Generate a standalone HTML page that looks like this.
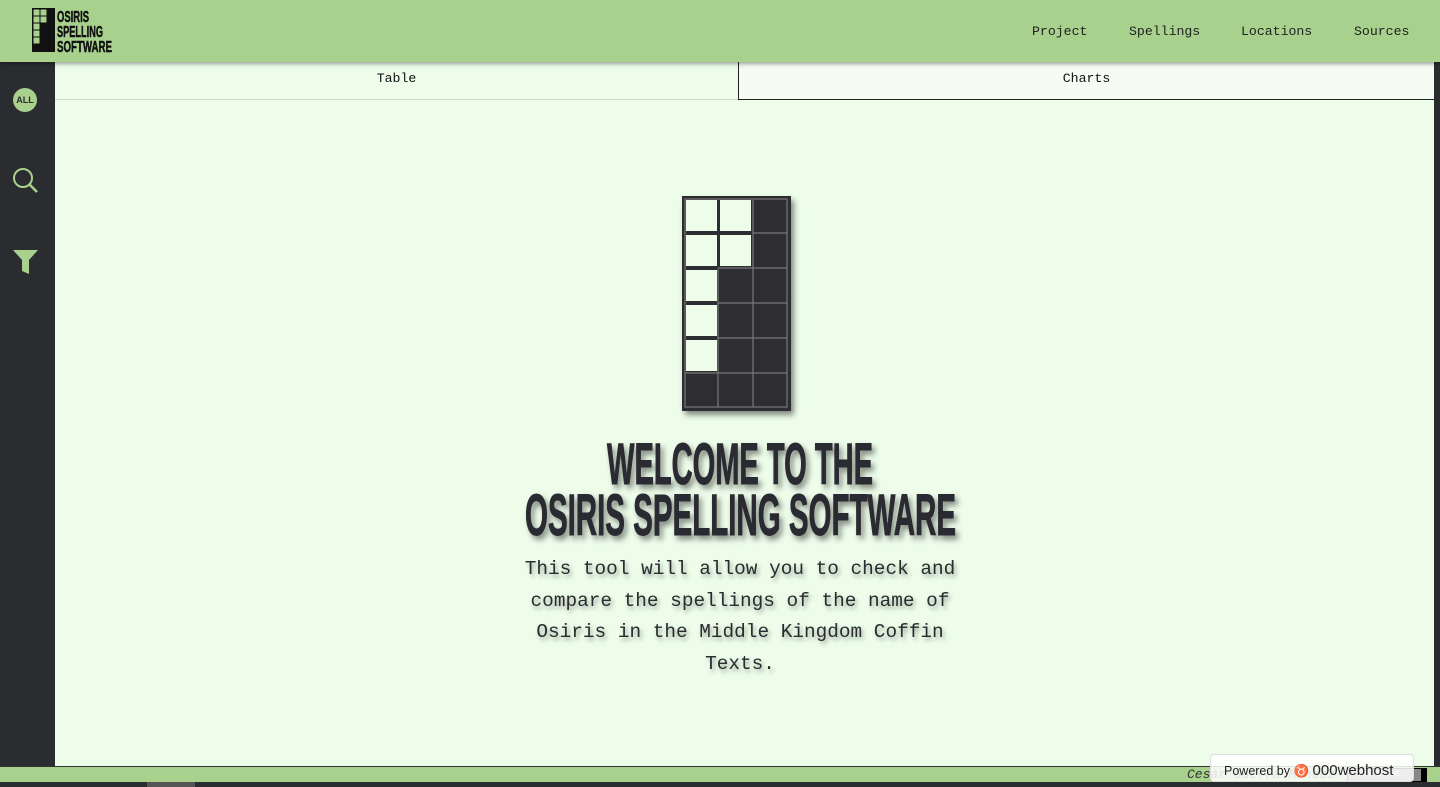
<!DOCTYPE html>
<html><head><meta charset="utf-8"><style>
*{margin:0;padding:0;box-sizing:border-box}
body{width:1440px;height:787px;overflow:hidden;background:#edfdea;font-family:"Liberation Mono",monospace;position:relative}
.hdr{position:absolute;left:0;top:0;width:1440px;height:62px;background:#a8d18d;box-shadow:0 2px 4px rgba(0,0,0,.35);z-index:3}
.nav{position:absolute;top:24px;font-size:13.2px;color:#222}
.side{position:absolute;left:0;top:62px;width:55px;height:704px;background:#2b2c30}
.tab{position:absolute;top:62px;height:38px;font-size:13.2px;color:#111;text-align:center;line-height:34px}
.foot{position:absolute;left:0;top:766px;width:1440px;height:16px;background:#a8d18d;border-top:1px solid #333}
.bot{position:absolute;left:0;top:782px;width:1440px;height:5px;background:#2b2c30}
.body{position:absolute;left:480px;width:520px;text-align:center;font-size:19.4px;line-height:31.5px;color:#2b2c30;top:554px;text-shadow:2px 3px 4px rgba(0,0,0,.35)}
</style></head><body>
<div class="hdr">
<svg style="position:absolute;left:32px;top:8px" width="23" height="44" viewBox="0 0 23 44">
<rect width="23" height="44" fill="#111"/>
<g fill="#a8d18d">
<rect x="1.5" y="1.5" width="6" height="6"/><rect x="8.5" y="1.5" width="6" height="6"/>
<rect x="1.5" y="8.5" width="6" height="6"/><rect x="8.5" y="8.5" width="6" height="6"/>
<rect x="1.5" y="15.5" width="6" height="6"/><rect x="1.5" y="22.5" width="6" height="6"/><rect x="1.5" y="29.5" width="6" height="6"/>
</g></svg>
<svg style="position:absolute;left:57px;top:7px" width="58" height="48">
<g font-family="Liberation Sans" font-weight="bold" font-size="16" fill="#111" stroke="#111" stroke-width=".5">
<text x="0" y="15" textLength="32" lengthAdjust="spacingAndGlyphs">OSIRIS</text>
<text x="0" y="30" textLength="46" lengthAdjust="spacingAndGlyphs">SPELLING</text>
<text x="0" y="45" textLength="55" lengthAdjust="spacingAndGlyphs">SOFTWARE</text></g></svg>
<div class="nav" style="left:1032px">Project</div>
<div class="nav" style="left:1129px">Spellings</div>
<div class="nav" style="left:1241px">Locations</div>
<div class="nav" style="left:1354px">Sources</div>
</div>
<div class="side">
<div style="position:absolute;left:13px;top:26px;width:24px;height:24px;border-radius:50%;background:#a8d18d;color:#2b2c30;font-family:'Liberation Sans';font-weight:bold;font-size:9px;line-height:24px;text-align:center">ALL</div>
<svg style="position:absolute;left:12px;top:105px" width="28" height="28"><circle cx="11" cy="11" r="9" fill="none" stroke="#a8d18d" stroke-width="2"/><line x1="17.5" y1="17.5" x2="25" y2="25" stroke="#a8d18d" stroke-width="2.5"/></svg>
<svg style="position:absolute;left:12px;top:187px" width="27" height="26"><path d="M1 1H26L17 11V25L10 22V11Z" fill="#a8d18d"/></svg>
</div>
<div style="position:absolute;left:1434px;top:62px;width:6px;height:704px;background:#2b2c30"></div>
<div class="tab" style="left:55px;width:683px;background:#edfdea;border-bottom:1px solid #ccd8c8">Table</div>
<div class="tab" style="left:738px;width:696px;background:#f6fbf4;border-left:1px solid #222;border-bottom:1px solid #222">Charts</div>
<svg style="position:absolute;left:676px;top:192px" width="130" height="230">
<defs><filter id="s"><feDropShadow dx="3" dy="4" stdDeviation="3" flood-opacity=".45"/></filter></defs>
<g filter="url(#s)">
<rect x="6" y="4" width="109" height="215" fill="#2e2e33"/>
</g>
<g fill="#edfdea">
<rect x="10" y="8" width="31" height="31"/><rect x="44" y="8" width="31" height="31"/>
<rect x="10" y="43" width="31" height="31"/><rect x="44" y="43" width="31" height="31"/>
<rect x="10" y="78" width="31" height="31"/><rect x="10" y="113" width="31" height="31"/><rect x="10" y="148" width="31" height="31"/>
</g>
<g stroke="#777" stroke-width="1.2" fill="none">
<line x1="77" y1="8" x2="77" y2="215"/><line x1="42" y1="77" x2="42" y2="215"/>
<line x1="77" y1="41" x2="111" y2="41"/><line x1="42" y1="76" x2="111" y2="76"/><line x1="42" y1="111" x2="111" y2="111"/><line x1="42" y1="146" x2="111" y2="146"/><line x1="9" y1="181" x2="111" y2="181"/>
<rect x="9" y="7" width="102" height="208"/>
</g></svg>
<svg style="position:absolute;left:500px;top:432px" width="480" height="115">
<defs><filter id="t"><feDropShadow dx="3" dy="4" stdDeviation="3" flood-opacity=".45"/></filter></defs>
<g font-family="Liberation Sans" font-weight="bold" font-size="58" fill="#2b2c30" stroke="#2b2c30" stroke-width="1" filter="url(#t)">
<text x="107" y="52" textLength="266" lengthAdjust="spacingAndGlyphs">WELCOME TO THE</text>
<text x="25" y="103" textLength="431" lengthAdjust="spacingAndGlyphs">OSIRIS SPELLING SOFTWARE</text>
</g></svg>
<div class="body">This tool will allow you to check and<br>compare the spellings of the name of<br>Osiris in the Middle Kingdom Coffin<br>Texts.</div>
<div class="foot"><span style="position:absolute;left:1187px;top:0;font-size:13px;font-style:italic;color:#333;line-height:16px">Cesar Guerra Mendez</span>
<div style="position:absolute;left:1347px;top:1px;width:80px;height:14px;background:#888;border:1px solid #000;border-right:6px solid #000;color:#fff;font-size:8px;line-height:12px;padding-left:4px">(cc) BY-NC</div></div>
<div style="position:absolute;left:1210px;top:754px;width:204px;height:28px;background:rgba(255,255,255,.85);border:1px solid #ddd;border-radius:4px;font-family:'Liberation Sans';font-size:12.5px;color:#222;padding:7px 0 0 13px">Powered by <span style="color:#d33;font-weight:bold">&#x2649;</span> <span style="font-size:15px">000webhost</span></div>
<div class="bot"><div style="position:absolute;left:147px;top:0;width:48px;height:5px;background:#555"></div></div>
</body></html>
